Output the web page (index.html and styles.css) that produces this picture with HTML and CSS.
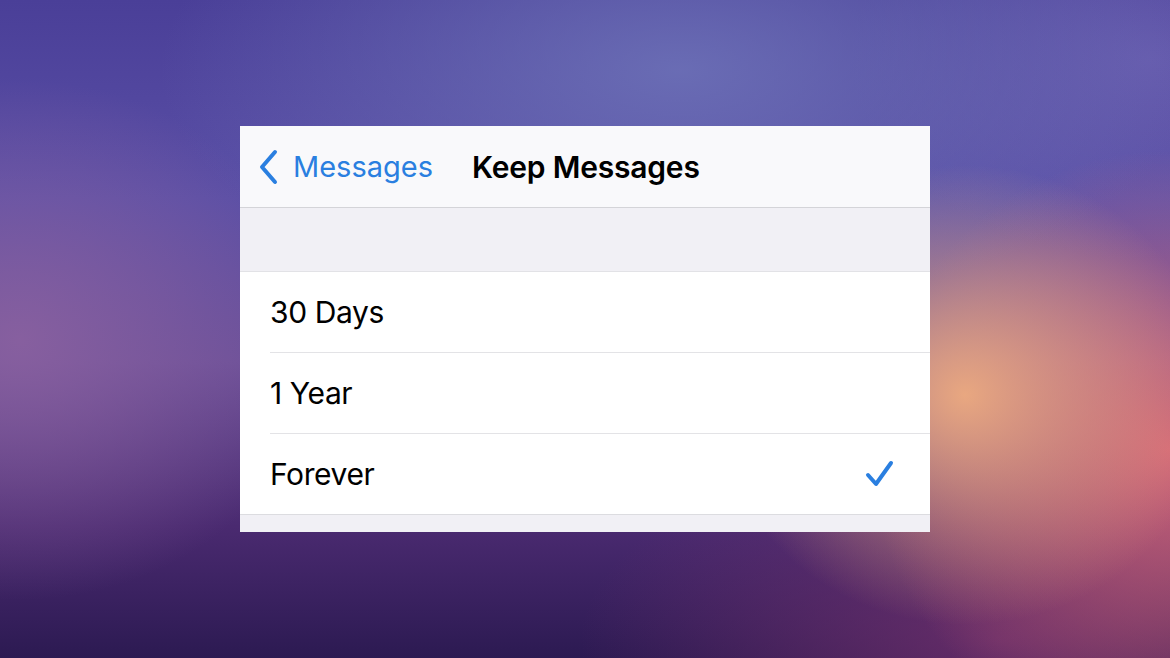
FILE: index.html
```html
<!DOCTYPE html>
<html lang="en">
<head>
<meta charset="utf-8">
<title>Keep Messages</title>
<link rel="stylesheet" href="styles.css">
</head>
<body>
<div class="stage">
  <div class="card">
    <div class="navbar">
      <div class="back">
        <svg class="chev" width="22" height="36" viewBox="0 0 22 36"><path d="M18 3 L5 18 L18 33" fill="none" stroke="#2a7fe0" stroke-width="4" stroke-linecap="round" stroke-linejoin="round"/></svg>
        <span class="back-label">Messages</span>
      </div>
      <div class="title">Keep Messages</div>
    </div>
    <div class="gap"></div>
    <div class="list">
      <div class="row"><span class="label">30 Days</span></div>
      <div class="row"><span class="label">1 Year</span></div>
      <div class="row last"><span class="label">Forever</span>
        <svg class="check" width="32" height="32" viewBox="0 0 32 32"><path d="M4 17 L12 26 L27 5" fill="none" stroke="#2a7fe0" stroke-width="4" stroke-linecap="round" stroke-linejoin="round"/></svg>
      </div>
    </div>
    <div class="foot"></div>
  </div>
</div>
</body>
</html>
```
FILE: styles.css
```css
html, body {
  margin: 0;
  padding: 0;
  width: 1170px;
  height: 658px;
  overflow: hidden;
}
.stage {
  width: 1170px;
  height: 658px;
  box-sizing: border-box;
  padding-top: 126px;
  padding-left: 240px;
  font-family: Inter, "Noto Sans", "Liberation Sans", sans-serif;
  background:
    radial-gradient(ellipse 250px 230px at 965px 395px, rgba(238,172,128,0.95), rgba(238,172,128,0) 100%),
    radial-gradient(ellipse 300px 300px at 1170px 450px, rgba(224,108,118,0.9), rgba(224,108,118,0) 100%),
    radial-gradient(ellipse 520px 240px at 680px 70px, rgba(112,118,186,0.8), rgba(112,118,186,0) 100%),
    radial-gradient(ellipse 300px 200px at 1150px 60px, rgba(108,98,178,0.8), rgba(108,98,178,0) 100%),
    radial-gradient(ellipse 300px 260px at 20px 340px, rgba(140,98,160,0.85), rgba(140,98,160,0) 100%),
    radial-gradient(ellipse 420px 200px at 1000px 640px, rgba(120,50,110,0.75), rgba(120,50,110,0) 100%),
    linear-gradient(180deg, #4a3f98 0%, #5a4fa6 30%, #6a4f98 55%, #4a2a70 80%, #2c1a52 100%);
}
.card {
  width: 690px;
  height: 406px;
  background: #ffffff;
  display: flex;
  flex-direction: column;
  overflow: hidden;
}
.navbar {
  height: 82px;
  background: #f9f9fb;
  border-bottom: 1px solid #d4d4d8;
  display: flex;
  align-items: center;
  box-sizing: border-box;
  padding-left: 17px;
  flex-shrink: 0;
}
.back {
  display: flex;
  align-items: center;
  gap: 14px;
  color: #2a7fe0;
}
.chev { display: block; }
.back-label {
  font-size: 29px;
  letter-spacing: 0;
}
.title {
  margin-left: 39px;
  font-size: 30px;
  font-weight: 600;
  color: #000;
  letter-spacing: -0.2px;
}
.gap {
  height: 63px;
  background: #f1f0f5;
  border-bottom: 1px solid #e2e2e6;
  flex-shrink: 0;
}
.list {
  background: #fff;
  padding-left: 30px;
}
.row {
  height: 80px;
  border-bottom: 1px solid #e3e3e6;
  display: flex;
  align-items: center;
  justify-content: space-between;
  padding-right: 34px;
}
.row.last { border-bottom: 1px solid #dcdce0; margin-left: -30px; padding-left: 30px; }
.label {
  font-size: 30px;
  color: #000;
  letter-spacing: -0.4px;
}
.check { display: block; }
.foot {
  flex: 1;
  background: #f1f0f5;
}
```
